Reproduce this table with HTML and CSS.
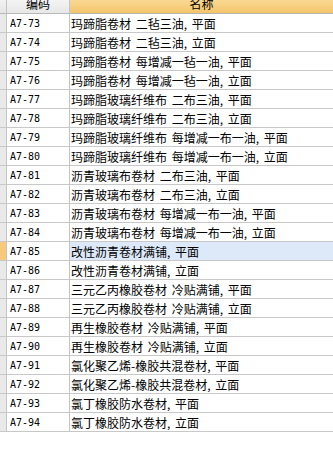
FILE: index.html
```html
<!DOCTYPE html>
<html lang="zh">
<head>
<meta charset="utf-8">
<title>定额列表</title>
<link rel="stylesheet" href="styles.css">
</head>
<body>
<div class="grid">
  <div class="hdr corner"></div>
  <div class="hdr hcode"><span>编码</span></div>
  <div class="hdr hname"><span>名称</span></div>

  <div class="rh"></div><div class="c code">A7-73</div><div class="c name">玛蹄脂卷材 二毡三油, 平面</div>
  <div class="rh"></div><div class="c code">A7-74</div><div class="c name">玛蹄脂卷材 二毡三油, 立面</div>
  <div class="rh"></div><div class="c code">A7-75</div><div class="c name">玛蹄脂卷材 每增减一毡一油, 平面</div>
  <div class="rh"></div><div class="c code">A7-76</div><div class="c name">玛蹄脂卷材 每增减一毡一油, 立面</div>
  <div class="rh"></div><div class="c code">A7-77</div><div class="c name">玛蹄脂玻璃纤维布 二布三油, 平面</div>
  <div class="rh"></div><div class="c code">A7-78</div><div class="c name">玛蹄脂玻璃纤维布 二布三油, 立面</div>
  <div class="rh"></div><div class="c code">A7-79</div><div class="c name">玛蹄脂玻璃纤维布 每增减一布一油, 平面</div>
  <div class="rh"></div><div class="c code">A7-80</div><div class="c name">玛蹄脂玻璃纤维布 每增减一布一油, 立面</div>
  <div class="rh"></div><div class="c code">A7-81</div><div class="c name">沥青玻璃布卷材 二布三油, 平面</div>
  <div class="rh"></div><div class="c code">A7-82</div><div class="c name">沥青玻璃布卷材 二布三油, 立面</div>
  <div class="rh"></div><div class="c code">A7-83</div><div class="c name">沥青玻璃布卷材 每增减一布一油, 平面</div>
  <div class="rh"></div><div class="c code">A7-84</div><div class="c name">沥青玻璃布卷材 每增减一布一油, 立面</div>
  <div class="rh sel"></div><div class="c code">A7-85</div><div class="c name selname">改性沥青卷材满铺, 平面</div>
  <div class="rh"></div><div class="c code">A7-86</div><div class="c name">改性沥青卷材满铺, 立面</div>
  <div class="rh"></div><div class="c code">A7-87</div><div class="c name">三元乙丙橡胶卷材 冷贴满铺, 平面</div>
  <div class="rh"></div><div class="c code">A7-88</div><div class="c name">三元乙丙橡胶卷材 冷贴满铺, 立面</div>
  <div class="rh"></div><div class="c code">A7-89</div><div class="c name">再生橡胶卷材 冷贴满铺, 平面</div>
  <div class="rh"></div><div class="c code">A7-90</div><div class="c name">再生橡胶卷材 冷贴满铺, 立面</div>
  <div class="rh"></div><div class="c code">A7-91</div><div class="c name">氯化聚乙烯-橡胶共混卷材, 平面</div>
  <div class="rh"></div><div class="c code">A7-92</div><div class="c name">氯化聚乙烯-橡胶共混卷材, 立面</div>
  <div class="rh"></div><div class="c code">A7-93</div><div class="c name">氯丁橡胶防水卷材, 平面</div>
  <div class="rh"></div><div class="c code">A7-94</div><div class="c name">氯丁橡胶防水卷材, 立面</div>
</div>
</body>
</html>
```

FILE: styles.css
```css
html, body {
  margin: 0;
  padding: 0;
  background: #ffffff;
}

.grid {
  display: grid;
  grid-template-columns: 7px 63px 1fr;
  grid-auto-rows: 19px;
  grid-template-rows: 14px;
  width: 333px;
  font-family: "Noto Sans CJK SC", sans-serif;
  font-size: 12px;
  color: #000;
}

.hdr {
  height: 13px;
  border-bottom: 1px solid #b9b9b9;
  overflow: hidden;
  display: flex;
  align-items: flex-end;
  justify-content: center;
}

.hdr span {
  line-height: 14px;
  margin-bottom: 2px;
  white-space: nowrap;
}

.corner {
  background: linear-gradient(#f3f3f3, #e4e4e4);
  border-right: 1px solid #c4c4c4;
}

.hcode {
  background: linear-gradient(#f4f4f4, #e7e7e7);
  border-right: 1px solid #c4c4c4;
}

.hname {
  background: linear-gradient(#f9d892, #f4c56c);
  border-bottom-color: #b5b5b0;
}

.rh {
  background: #e9e9e9;
  border-right: 1px solid #c4c4c4;
  border-bottom: 1px solid #c8c8c8;
}

.rh.sel {
  background: #f7c97c;
}

.c {
  border-bottom: 1px solid #c8c8c8;
  display: flex;
  align-items: center;
  white-space: nowrap;
  overflow: hidden;
}

.code {
  border-right: 1px solid #c4c4c4;
  padding-left: 3px;
  font-family: "DejaVu Sans Mono", monospace;
  font-size: 10px;
}

.name {
  padding-left: 1px;
  word-spacing: 2px;
}

.selname {
  background: #dde9f8;
}
```
